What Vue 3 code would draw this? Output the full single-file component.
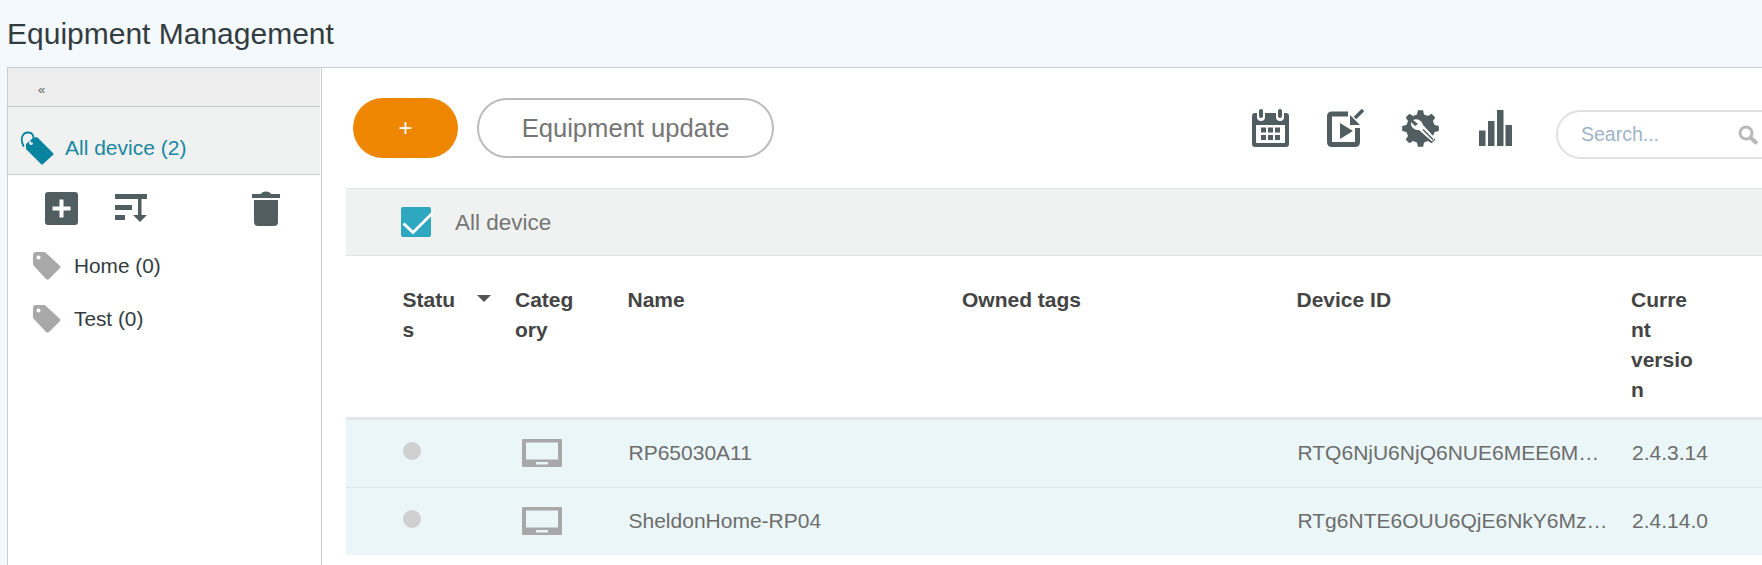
<script setup>
const tags = [
  { name: 'Home (0)' },
  { name: 'Test (0)' }
]

const devices = [
  { name: 'RP65030A11', id: 'RTQ6NjU6NjQ6NUE6MEE6MTE=', version: '2.4.3.14' },
  { name: 'SheldonHome-RP04', id: 'RTg6NTE6OUU6QjE6NkY6MzQ=', version: '2.4.14.0' }
]

// gear outline with 8 teeth
const gearPath = (() => {
  const cx = 18.5
  const cy = 18.5
  const teeth = 8
  const pts = []
  for (let i = 0; i < teeth; i++) {
    const a = (i / teeth) * Math.PI * 2 - Math.PI / 2
    const step = Math.PI / teeth
    const add = (r, ang) => pts.push(`${(cx + r * Math.cos(ang)).toFixed(2)} ${(cy + r * Math.sin(ang)).toFixed(2)}`)
    add(14.5, a - step * 0.62)
    add(18.5, a - step * 0.36)
    add(18.5, a + step * 0.36)
    add(14.5, a + step * 0.62)
  }
  return 'M' + pts.join('L') + 'Z'
})()
</script>

<template>
  <div class="page">
    <header class="page-title">Equipment Management</header>
    <div class="page-body">
      <aside class="sidebar">
        <div class="collapse-bar">«</div>
        <div class="all-row">
          <svg class="all-tag" width="34" height="35" viewBox="0 0 34 35">
            <path d="M13 7 L17 6 L33 22 Q34 23 33 24 L23 33 Q22 34 21 33 L6 18 L6 13 Z" fill="#09849f" />
            <circle cx="11" cy="12" r="2" fill="#f0f1f1" />
            <path d="M3.500 15 C-0.500 7 3 1.500 8 1.500 C13 1.500 15 6 12 11" fill="none" stroke="#09849f" stroke-width="1.800" stroke-linecap="round" />
          </svg>
          <span>All device (2)</span>
        </div>
        <div class="tag-tools">
          <svg class="tool-add" width="33" height="33" viewBox="0 0 33 33">
            <rect width="33" height="33" rx="3" fill="#505d61" />
            <path d="M16.500 7.500 V25.500 M7.500 16.500 H25.500" stroke="#fff" stroke-width="4" />
          </svg>
          <svg class="tool-sort" width="32" height="29" viewBox="0 0 32 29" fill="#505d61">
            <rect width="32" height="5" />
            <rect y="11" width="17" height="5" />
            <rect y="21" width="10" height="5" />
            <rect x="23" y="4" width="3.500" height="19" />
            <path d="M18 21 H32 L25 28 Z" />
          </svg>
          <svg class="tool-trash" width="28" height="35" viewBox="0 0 28 35" fill="#505d61">
            <path d="M0 3 H9 Q10 0.500 14 0.500 Q18 0.500 19 3 H28 V7 H0 Z" />
            <path d="M2 9 H26 V31 Q26 35 22 35 H6 Q2 35 2 31 Z" />
          </svg>
        </div>
        <ul class="tag-list">
          <li v-for="tag in tags" :key="tag.name">
            <svg width="28" height="28" viewBox="0 0 28 28">
              <path d="M3 0 H11 Q12 0 13 1 L27 14 Q28 15 27 16 L16 27 Q14.500 28 13 27 L1 14 Q0 13 0 12 V3 Q0 0 3 0 Z" fill="#a8a8a8" />
              <circle cx="5.500" cy="5.500" r="2" fill="#fff" />
            </svg>
            <span>{{ tag.name }}</span>
          </li>
        </ul>
      </aside>

      <main class="content">
        <div class="toolbar">
          <button class="btn-add">+</button>
          <button class="btn-update">Equipment update</button>
          <div class="tool-icons">
            <svg width="37" height="38" viewBox="0 0 37 38">
              <path d="M3 4 H5 V8 A4 4 0 0 0 13 8 V4 H24 V8 A4 4 0 0 0 32 8 V4 H34 Q37 4 37 7 V35 Q37 38 34 38 H3 Q0 38 0 35 V7 Q0 4 3 4 Z" fill="#505d61" />
              <rect x="7" y="0" width="4" height="9" rx="2" fill="#505d61" />
              <rect x="26" y="0" width="4" height="9" rx="2" fill="#505d61" />
              <rect x="4" y="16" width="29" height="18" fill="#fff" />
              <g fill="#505d61">
                <rect x="9" y="18.500" width="5" height="5" /><rect x="16" y="18.500" width="5" height="5" /><rect x="23" y="18.500" width="5" height="5" />
                <rect x="9" y="26" width="5" height="5" /><rect x="16" y="26" width="5" height="5" /><rect x="23" y="26" width="5" height="5" />
              </g>
            </svg>
            <svg width="37" height="38" viewBox="0 0 37 38">
              <path d="M21 5 H5 Q2.500 5 2.500 7.500 V33 Q2.500 35.500 5 35.500 H28 Q30.500 35.500 30.500 33 V19" fill="none" stroke="#505d61" stroke-width="5" />
              <path d="M13 14 V30 L26 22 Z" fill="#505d61" />
              <path d="M36 1 L28 9" stroke="#505d61" stroke-width="3.500" />
              <path d="M23 6 L23 16 L33 16 Z" fill="#505d61" />
            </svg>
            <svg width="37" height="37" viewBox="0 0 37 37">
              <path :d="gearPath" fill="#505d61" />
              <path d="M11 10 A7 7 0 0 1 21 15 L33 28 L30 31.500 L17 20 A7 7 0 0 1 9 12 L13 16 L16 14 Z" fill="#fff" />
              <path d="M21 19.500 L31 29.500" stroke="#505d61" stroke-width="1.500" />
            </svg>
            <svg class="bars" width="33" height="36" viewBox="0 0 33 36" fill="#505d61">
              <rect x="0" y="20.500" width="6.500" height="15.500" />
              <rect x="9" y="11" width="6.500" height="25" />
              <rect x="18" y="0" width="6.500" height="36" />
              <rect x="26.500" y="15" width="6.500" height="21" />
            </svg>
          </div>
          <div class="search">
            <span>Search...</span>
            <svg width="22" height="20" viewBox="0 0 22 20" fill="none" stroke="#b9b9b9">
              <circle cx="8" cy="8" r="6" stroke-width="3" />
              <path d="M12.500 12.500 L19 18.500" stroke-width="4" />
            </svg>
          </div>
        </div>

        <div class="band">
          <svg class="check" width="30" height="30" viewBox="0 0 30 30">
            <rect width="30" height="30" rx="2" fill="#2ea7c0" />
            <path d="M2.500 16.500 L12 25.500 L32 5.500" fill="none" stroke="#fff" stroke-width="3" />
          </svg>
          <span>All device</span>
        </div>

        <div class="table-head row-grid">
          <div class="th narrow">Status</div>
          <div class="caret-cell"><i class="caret"></i></div>
          <div class="th narrow">Category</div>
          <div class="th">Name</div>
          <div class="th">Owned tags</div>
          <div class="th">Device ID</div>
          <div class="th narrow">Current version</div>
        </div>
        <div v-for="d in devices" :key="d.name" class="table-row row-grid">
          <div class="status-cell"><i class="dot"></i></div>
          <div></div>
          <div class="cat-cell">
            <svg width="40" height="28" viewBox="0 0 40 28">
              <rect width="40" height="28" rx="1" fill="#a8a8a8" />
              <rect x="4" y="3.500" width="32" height="17" fill="#eaf6f7" />
              <rect x="14" y="23" width="12" height="2.500" fill="#eaf6f7" />
            </svg>
          </div>
          <div class="td">{{ d.name }}</div>
          <div class="td"></div>
          <div class="td id-cell">{{ d.id }}</div>
          <div class="td">{{ d.version }}</div>
        </div>
      </main>
    </div>
  </div>
</template>

<style>
html, body {
  margin: 0;
  background: #fff;
}
</style>

<style scoped>
.page {
  height: 565px;
  display: flex;
  flex-direction: column;
  overflow: hidden;
  background: #f3f9fc;
  font-family: "Liberation Sans", Arial, sans-serif;
}

.page-title {
  height: 67px;
  padding-left: 7px;
  box-sizing: border-box;
  line-height: 67px;
  font-size: 30px;
  color: #333c3f;
  flex: none;
}

.page-body {
  flex: 1;
  display: flex;
  min-height: 0;
  padding-left: 7px;
}

.sidebar {
  width: 315px;
  flex: none;
  box-sizing: border-box;
  background: #fff;
  border-left: 1px solid #ccc;
  border-right: 1px solid #ccc;
  border-top: 1px solid #ccc;
  padding-right: 1px;
}

.collapse-bar {
  height: 39px;
  box-sizing: border-box;
  background: #ecedec;
  border-bottom: 1px solid #ccc;
  padding-left: 30px;
  padding-top: 3px;
  line-height: 38px;
  font-size: 13px;
  color: #666;
}

.all-row {
  height: 68px;
  box-sizing: border-box;
  display: flex;
  align-items: center;
  background: #f0f1f1;
  border-bottom: 1px solid #ccc;
  padding-left: 12px;
  padding-top: 15px;
  font-size: 21px;
  color: #1a87a0;
}

.all-tag {
  margin-right: 11px;
}

.tag-tools {
  display: flex;
  align-items: center;
  height: 52px;
  padding-left: 37px;
  padding-top: 7px;
}

.tool-sort {
  margin-left: 37px;
}

.tool-trash {
  margin-left: 105px;
}

.tag-list {
  list-style: none;
  margin: 0;
  padding: 5px 0 0 25px;
}

.tag-list li {
  display: flex;
  align-items: center;
  height: 53px;
  gap: 13px;
  font-size: 20.800px;
  color: #333c3f;
}

.content {
  flex: 1;
  min-width: 0;
  background: #fff;
  border-top: 1px solid #ccc;
  padding-left: 24px;
  overflow: hidden;
}

.toolbar {
  height: 120px;
  box-sizing: border-box;
  padding: 30px 0 0 7px;
  display: flex;
  align-items: flex-start;
}

.btn-add {
  width: 105px;
  height: 60px;
  border: 0;
  border-radius: 30px;
  background: #ee8600;
  color: #fff;
  font-family: inherit;
  font-size: 24px;
  flex: none;
}

.btn-update {
  width: 297px;
  height: 60px;
  margin-left: 19px;
  border: 2px solid #bbb;
  border-radius: 30px;
  background: #fff;
  color: #757575;
  font-family: inherit;
  font-size: 25.600px;
  flex: none;
}

.tool-icons {
  display: flex;
  align-items: center;
  gap: 38px;
  margin-left: 478px;
  margin-top: 11px;
  flex: none;
}

.bars {
  margin-left: 2px;
}

.search {
  width: 260px;
  height: 49px;
  margin-left: 44px;
  margin-top: 12px;
  box-sizing: border-box;
  border: 2px solid #e0e0e0;
  border-radius: 25px;
  display: flex;
  align-items: center;
  padding-left: 23px;
  font-size: 19.500px;
  color: #9eb3c8;
  flex: none;
}

.search svg {
  margin-left: 79px;
}

.band {
  height: 68px;
  box-sizing: border-box;
  background: #f0f2f2;
  border-top: 1px solid #e0e3e3;
  border-bottom: 1px solid #e0e3e3;
  display: flex;
  align-items: center;
  padding-left: 55px;
  gap: 24px;
  font-size: 22.500px;
  color: #757575;
}

.band span {
  padding-top: 2px;
}

.check {
  overflow: visible;
}

.row-grid {
  display: grid;
  grid-template-columns: 74px 38.500px 112.500px 334.500px 334.500px 334.500px 1fr;
  padding-left: 57.500px;
}

.table-head {
  height: 164px;
  box-sizing: border-box;
  border-bottom: 3px solid #e3e6e6;
  padding-top: 29px;
  padding-left: 56.500px;
}

.th {
  font-size: 21px;
  font-weight: 700;
  line-height: 30px;
  color: #444;
}

.th.narrow {
  width: 63px;
  overflow-wrap: break-word;
}

.caret-cell {
  padding-top: 10px;
}

.caret {
  display: block;
  width: 0;
  height: 0;
  border-left: 7px solid transparent;
  border-right: 7px solid transparent;
  border-top: 7px solid #555;
}

.table-row {
  height: 68px;
  box-sizing: border-box;
  background: #eaf6f7;
  border-bottom: 1px solid #dce9ea;
  padding-bottom: 2px;
  align-items: center;
}

.table-row:last-child {
  border-bottom: 0;
  height: 67px;
}

.status-cell {
  line-height: 0;
}

.dot {
  display: block;
  width: 18px;
  height: 18px;
  border-radius: 50%;
  background: #d0d0d2;
  margin-bottom: 4px;
  margin-left: -1px;
}

.cat-cell {
  padding-left: 6px;
  line-height: 0;
}

.td {
  font-size: 21px;
  color: #6d6d6d;
  min-width: 0;
  white-space: nowrap;
}

.id-cell {
  max-width: 312px;
  overflow: hidden;
  text-overflow: ellipsis;
}
</style>
